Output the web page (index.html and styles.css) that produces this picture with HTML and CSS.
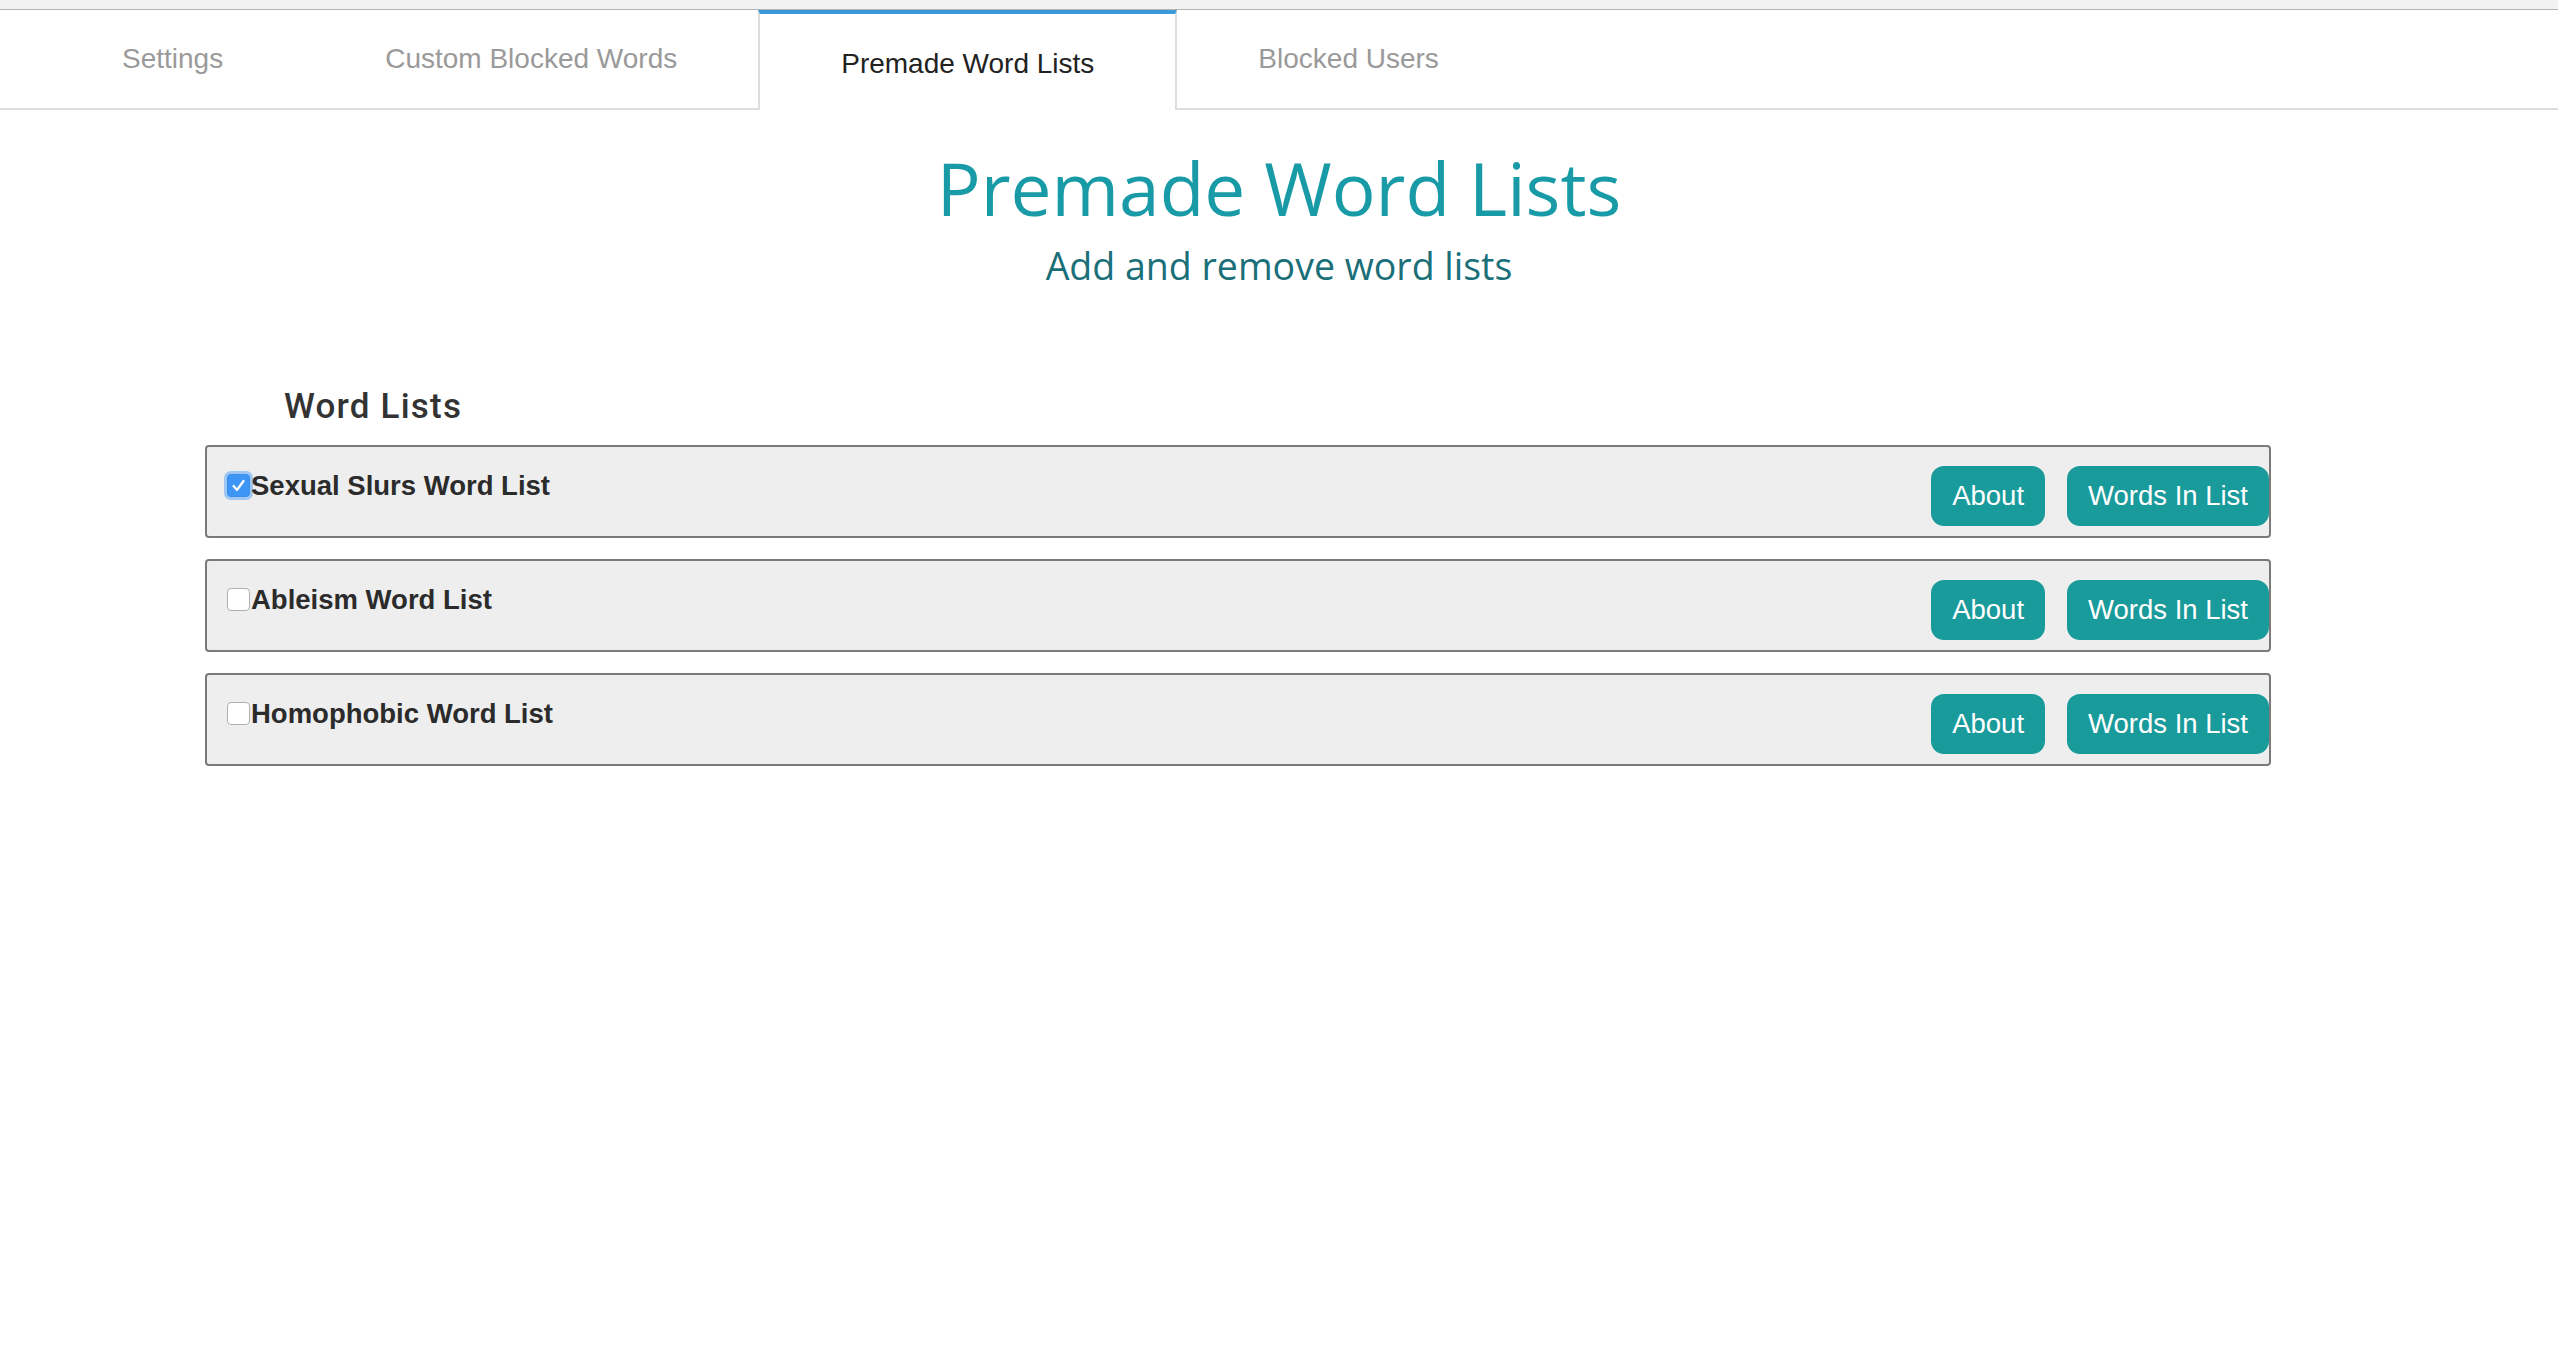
FILE: index.html
```html
<!DOCTYPE html>
<html lang="en">
<head>
    <meta charset="UTF-8">
    <meta name="viewport" content="width=device-width, initial-scale=1.0">
    <title>Premade Word Lists</title>
    <link rel="stylesheet" href="styles.css">
</head>
<body>
<div class="top-strip"></div>
<nav class="tabs">
    <a class="tab">Settings</a>
    <a class="tab">Custom Blocked Words</a>
    <a class="tab active">Premade Word Lists</a>
    <a class="tab">Blocked Users</a>
</nav>

<header class="page-header">
    <h1 class="page-title">Premade Word Lists</h1>
    <p class="page-subtitle">Add and remove word lists</p>
</header>

<section class="lists">
    <h3 class="lists-title">Word Lists</h3>

    <div class="list-row">
        <label class="list-label">
            <span class="check checked">
                <svg viewBox="0 0 23 23" width="23" height="23"><path d="M6.5 12 L10 16 L16.5 7" fill="none" stroke="#fff" stroke-width="2.2" stroke-linecap="round" stroke-linejoin="round"/></svg>
            </span>
            Sexual Slurs Word List
        </label>
        <div class="list-buttons">
            <button class="list-btn">About</button>
            <button class="list-btn">Words In List</button>
        </div>
    </div>

    <div class="list-row">
        <label class="list-label">
            <span class="check"></span>
            Ableism Word List
        </label>
        <div class="list-buttons">
            <button class="list-btn">About</button>
            <button class="list-btn">Words In List</button>
        </div>
    </div>

    <div class="list-row">
        <label class="list-label">
            <span class="check"></span>
            Homophobic Word List
        </label>
        <div class="list-buttons">
            <button class="list-btn">About</button>
            <button class="list-btn">Words In List</button>
        </div>
    </div>
</section>
</body>
</html>
```

FILE: styles.css
```css
body {
    margin: 0;
    background: #fff;
    font-family: "Liberation Sans", Arial, sans-serif;
    color: #333;
}

.top-strip {
    height: 9px;
    background: #f2f2f2;
    border-bottom: 1px solid #b5b5b5;
}

.tabs {
    display: flex;
    height: 98px;
    padding-left: 41px;
    border-bottom: 2px solid #ddd;
}

.tab {
    display: flex;
    align-items: center;
    padding: 0 81px;
    font-size: 28px;
    color: #9a9a9a;
    cursor: pointer;
}

.tab.active {
    color: #222;
    background: #fff;
    border-top: 4px solid #3a99d8;
    border-left: 2px solid #ddd;
    border-right: 2px solid #ddd;
    margin-bottom: -2px;
    padding-top: 4px;
}

.page-header {
    text-align: center;
    font-family: "Open Sans", sans-serif;
}

.page-title {
    margin: 41px 0 0;
    font-size: 73px;
    line-height: 1;
    font-weight: normal;
    color: #189ba6;
}

.page-subtitle {
    margin: 23px 0 0;
    font-size: 37.5px;
    line-height: 1;
    color: #1a6f79;
}

.lists {
    margin-left: 205px;
    width: 2066px;
}

.lists-title {
    margin: 104px 0 21px 79px;
    font-family: Roboto, sans-serif;
    font-size: 35px;
    font-weight: 500;
    letter-spacing: 1.2px;
    line-height: 1;
    color: #333;
}

.list-row {
    display: flex;
    align-items: flex-start;
    box-sizing: border-box;
    height: 93px;
    padding: 19px 0 0 18px;
    margin-bottom: 21px;
    background: #eee;
    border: 2px solid #7a7a7a;
    border-radius: 4px;
}

.list-label {
    display: flex;
    align-items: center;
    margin-top: 6px;
    font-size: 27.5px;
    font-weight: bold;
    line-height: 1;
    color: #2b2b2b;
}

.check {
    display: inline-flex;
    width: 23px;
    height: 23px;
    box-sizing: border-box;
    margin: 0 1px 0 2px;
    background: #fff;
    border: 1px solid #b0b0b0;
    border-radius: 4px;
}

.check.checked {
    background: #3d95f5;
    border-color: #3a8ee8;
    box-shadow: 0 0 0 3px rgba(80, 160, 250, 0.5);
}

.check svg {
    margin: -1px;
}

.list-buttons {
    display: flex;
    gap: 22px;
    margin-left: auto;
}

.list-btn {
    height: 60px;
    padding: 0 21px;
    border: none;
    border-radius: 13px;
    background: #199a9b;
    color: #fff;
    font-family: "Liberation Sans", Arial, sans-serif;
    font-size: 27.5px;
    cursor: pointer;
}
```
